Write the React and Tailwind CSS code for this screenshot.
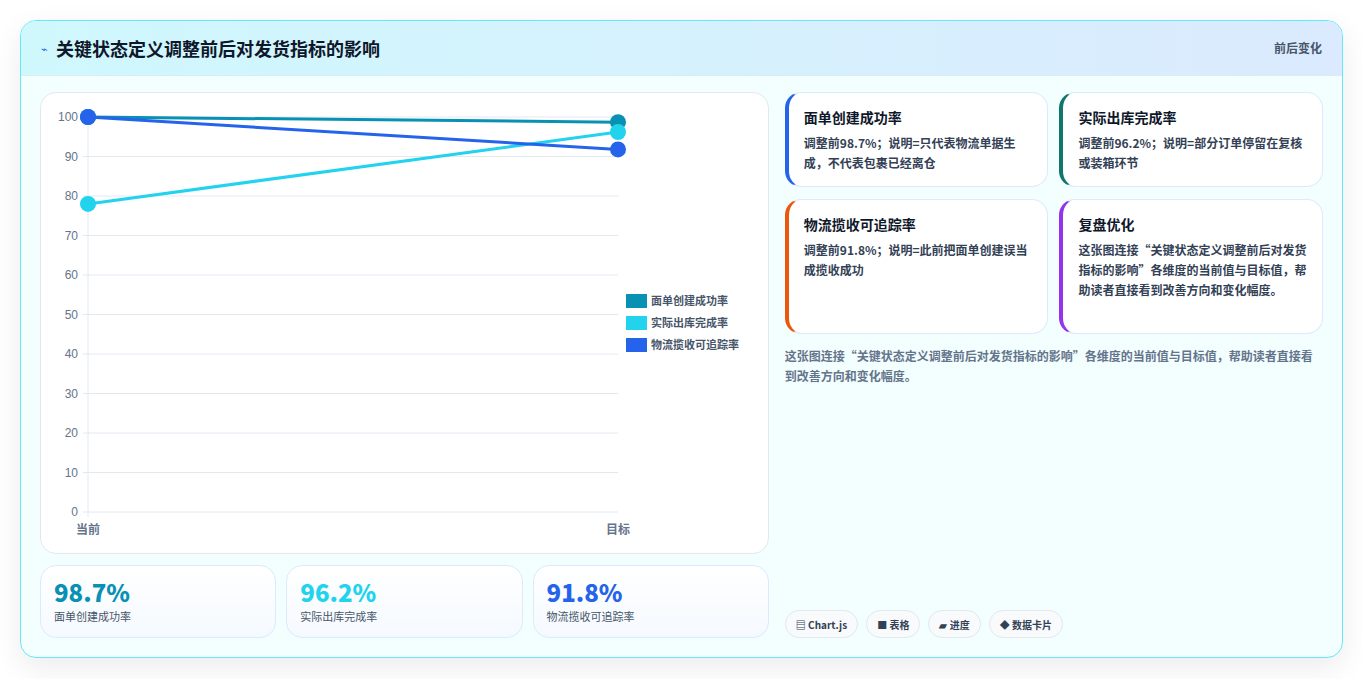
export default function App(){
const F={fontFamily:'"Noto Sans CJK SC","Noto Sans",sans-serif'};
const X0=47,X1=577,Y=(v)=>419-v*3.95;
const series=[["#0891b2",100,98.7],["#22d3ee",78,96.2],["#2563eb",100,91.8]];
const grid=[0,10,20,30,40,50,60,70,80,90,100];
const cards=[["面单创建成功率","调整前98.7%；说明=只代表物流单据生成，不代表包裹已经离仓","border-l-[#2563eb]"],["实际出库完成率","调整前96.2%；说明=部分订单停留在复核或装箱环节","border-l-[#0f766e]"],["物流揽收可追踪率","调整前91.8%；说明=此前把面单创建误当成揽收成功","border-l-[#ea580c]"],["复盘优化","这张图连接“关键状态定义调整前后对发货指标的影响”各维度的当前值与目标值，帮助读者直接看到改善方向和变化幅度。","border-l-[#9333ea]"]];
return(<div style={F} className="w-[1363px] h-[679px] bg-white p-5">
<div className="h-[638px] rounded-2xl border border-[#67e8f9] bg-[#f3feff] overflow-hidden flex flex-col shadow-[0_10px_30px_rgba(0,0,0,0.08)]">
<div className="h-[55px] shrink-0 flex items-center justify-between px-5 bg-gradient-to-r from-[#cff8fd] to-[#dbeafe] border-b border-[#d6eef5]">
<div className="flex items-center gap-2"><span className="text-[#2563eb] text-[11px]">⌁</span><span className="text-[18px] font-bold text-[#0f172a]">关键状态定义调整前后对发货指标的影响</span></div>
<span className="text-[12px] font-semibold text-[#475569]">前后变化</span></div>
<div className="flex gap-4 px-[19px] pt-4">
<div className="w-[730px] flex flex-col gap-[11px]">
<div className="h-[462px] rounded-2xl bg-white border border-[#e2e8f0] relative">
<svg width="729" height="462" className="absolute inset-0">
{grid.map(g=><g key={g}><line x1={X0-5} x2={X1} y1={Y(g)} y2={Y(g)} stroke="#e2e8f0"/><text x={X0-10} y={Y(g)+4} textAnchor="end" fontSize="12" fill="#64748b" fontFamily="Liberation Sans">{g}</text></g>)}
<line x1={X0} x2={X0} y1={Y(100)} y2={Y(0)+5} stroke="#e2e8f0"/>
<text x={X0} y={441} textAnchor="middle" fontSize="12" fontWeight="600" fill="#64748b">当前</text>
<text x={X1} y={441} textAnchor="middle" fontSize="12" fontWeight="600" fill="#64748b">目标</text>
{series.map(([c,a,b])=><g key={c}><line x1={X0} y1={Y(a)} x2={X1} y2={Y(b)} stroke={c} strokeWidth="3"/><circle cx={X0} cy={Y(a)} r="8" fill={c}/><circle cx={X1} cy={Y(b)} r="8" fill={c}/></g>)}
{["面单创建成功率","实际出库完成率","物流揽收可追踪率"].map((t,i)=><g key={t}><rect x={585} y={201+i*22} width={21} height={14} fill={series[i][0]}/><text x={610} y={212+i*22} fontSize="11" fill="#475569" fontWeight="600">{t}</text></g>)}
</svg></div>
<div className="grid grid-cols-3 gap-[10px]">
{[["98.7%","#0891b2","面单创建成功率"],["96.2%","#22d3ee","实际出库完成率"],["91.8%","#2563eb","物流揽收可追踪率"]].map(([v,c,l])=><div key={l} className="h-[73px] rounded-2xl border border-[#dbeafe] bg-gradient-to-b from-white to-[#f5faff] px-[13px] pt-[10px]"><div className="text-[24px] font-extrabold leading-[32px]" style={{color:c}}>{v}</div><div className="text-[11px] text-[#475569]">{l}</div></div>)}
</div></div>
<div className="w-[539px] flex flex-col">
<div className="grid grid-cols-2 gap-x-[11px] gap-y-[12px]" style={{gridTemplateRows:"95px 135px"}}>
{cards.map(([t,d,b])=><div key={t} className={`rounded-2xl bg-white border border-[#dbeafe] border-l-4 ${b} pl-[15px] pr-3 pt-[14px]`}><div className="text-[14px] font-bold text-[#0f172a] mb-[5px]">{t}</div><div className="text-[12px] leading-[20px] font-semibold text-[#334155]">{d}</div></div>)}
</div>
<div className="mt-3 text-[12px] leading-[20px] font-semibold text-[#64748b]">这张图连接“关键状态定义调整前后对发货指标的影响”各维度的当前值与目标值，帮助读者直接看到改善方向和变化幅度。</div>
<div className="mt-auto flex gap-2 pt-[224px]">
{["▤ Chart.js","■ 表格","▰ 进度","◆ 数据卡片"].map(t=><span key={t} className="h-[28px] px-[10px] flex items-center rounded-full border border-[#e2e8f0] bg-[#f8fafc] text-[10px] font-bold text-[#334155]">{t}</span>)}
</div></div></div></div></div>)}
